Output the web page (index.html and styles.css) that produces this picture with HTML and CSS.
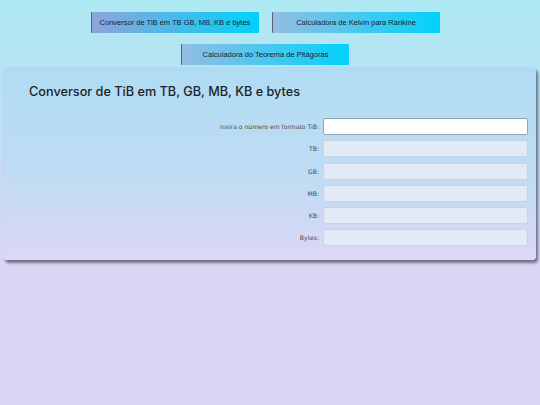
FILE: index.html
```html
<!DOCTYPE html>
<html lang="pt">
<head>
<meta charset="utf-8">
<title>Conversor de TiB</title>
<link rel="stylesheet" href="styles.css">
</head>
<body>
<nav class="nav">
  <button class="nav-btn active">Conversor de TiB em TB GB, MB, KB e bytes</button>
  <button class="nav-btn">Calculadora de Kelvin para Rankine</button>
  <button class="nav-btn">Calculadora do Teorema de Pitágoras</button>
</nav>
<main class="card">
  <h1 class="title">Conversor de TiB em TB, GB, MB, KB e bytes</h1>
  <form class="form">
    <label class="label" for="tib">Insira o número em formato TiB:</label>
    <input class="field field-main" id="tib" type="text">
    <label class="label" for="tb">TB:</label>
    <input class="field" id="tb" type="text" readonly>
    <label class="label" for="gb">GB:</label>
    <input class="field" id="gb" type="text" readonly>
    <label class="label" for="mb">MB:</label>
    <input class="field" id="mb" type="text" readonly>
    <label class="label" for="kb">KB:</label>
    <input class="field" id="kb" type="text" readonly>
    <label class="label" for="bytes">Bytes:</label>
    <input class="field" id="bytes" type="text" readonly>
  </form>
</main>
</body>
</html>
```
FILE: styles.css
```css
html, body {
  margin: 0;
  padding: 0;
  height: 100%;
}
body {
  background: linear-gradient(to bottom, #ade9f3 0%, #c2def4 35%, #dcd6f5 66%, #dcd6f6 100%);
  font-family: "Liberation Sans", Arial, sans-serif;
}
.nav {
  width: 360px;
  margin: 0 auto;
  padding: 12px 10px 0 0;
  display: flex;
  flex-wrap: wrap;
  justify-content: center;
  gap: 11px 13px;
}
.nav-btn {
  width: 168px;
  height: 21px;
  padding: 0;
  border: none;
  border-left: 1px solid #5a6270;
  border-radius: 1px;
  background: linear-gradient(to right, #93bde2, #00d2fb);
  font-family: "Liberation Sans", Arial, sans-serif;
  font-size: 7.5px;
  color: #1a2230;
  cursor: pointer;
}
.nav-btn.active {
  background: linear-gradient(to right, #8ea4d9, #00d2fb);
}
.card {
  margin: 2px 4px 0 3px;
  padding: 17px 8px 14px 26px;
  border-radius: 4px;
  background: linear-gradient(to bottom, #b0dcf3 0%, #bfdcf3 55%, #dcd7f5 100%);
  box-shadow: 2px 3px 3px rgba(40, 40, 60, 0.6);
}
.title {
  margin: 0 0 19px 0;
  font-family: Inter, "Noto Sans", sans-serif;
  font-size: 12.7px;
  font-weight: 500;
  color: #1c232c;
}
.form {
  display: grid;
  grid-template-columns: 1fr 205px;
  column-gap: 4px;
  row-gap: 5.3px;
  align-items: center;
}
.label {
  justify-self: end;
  font-family: "DejaVu Sans", Verdana, sans-serif;
  font-size: 6.1px;
  color: #454b52;
}
.field {
  box-sizing: border-box;
  height: 17px;
  width: 205px;
  margin: 0;
  border: 1px solid #c4d4e4;
  border-radius: 2px;
  background: #e2ebf5;
  font-size: 8px;
}
.field-main {
  background: #ffffff;
  border-color: #8fa6b8;
}
```
